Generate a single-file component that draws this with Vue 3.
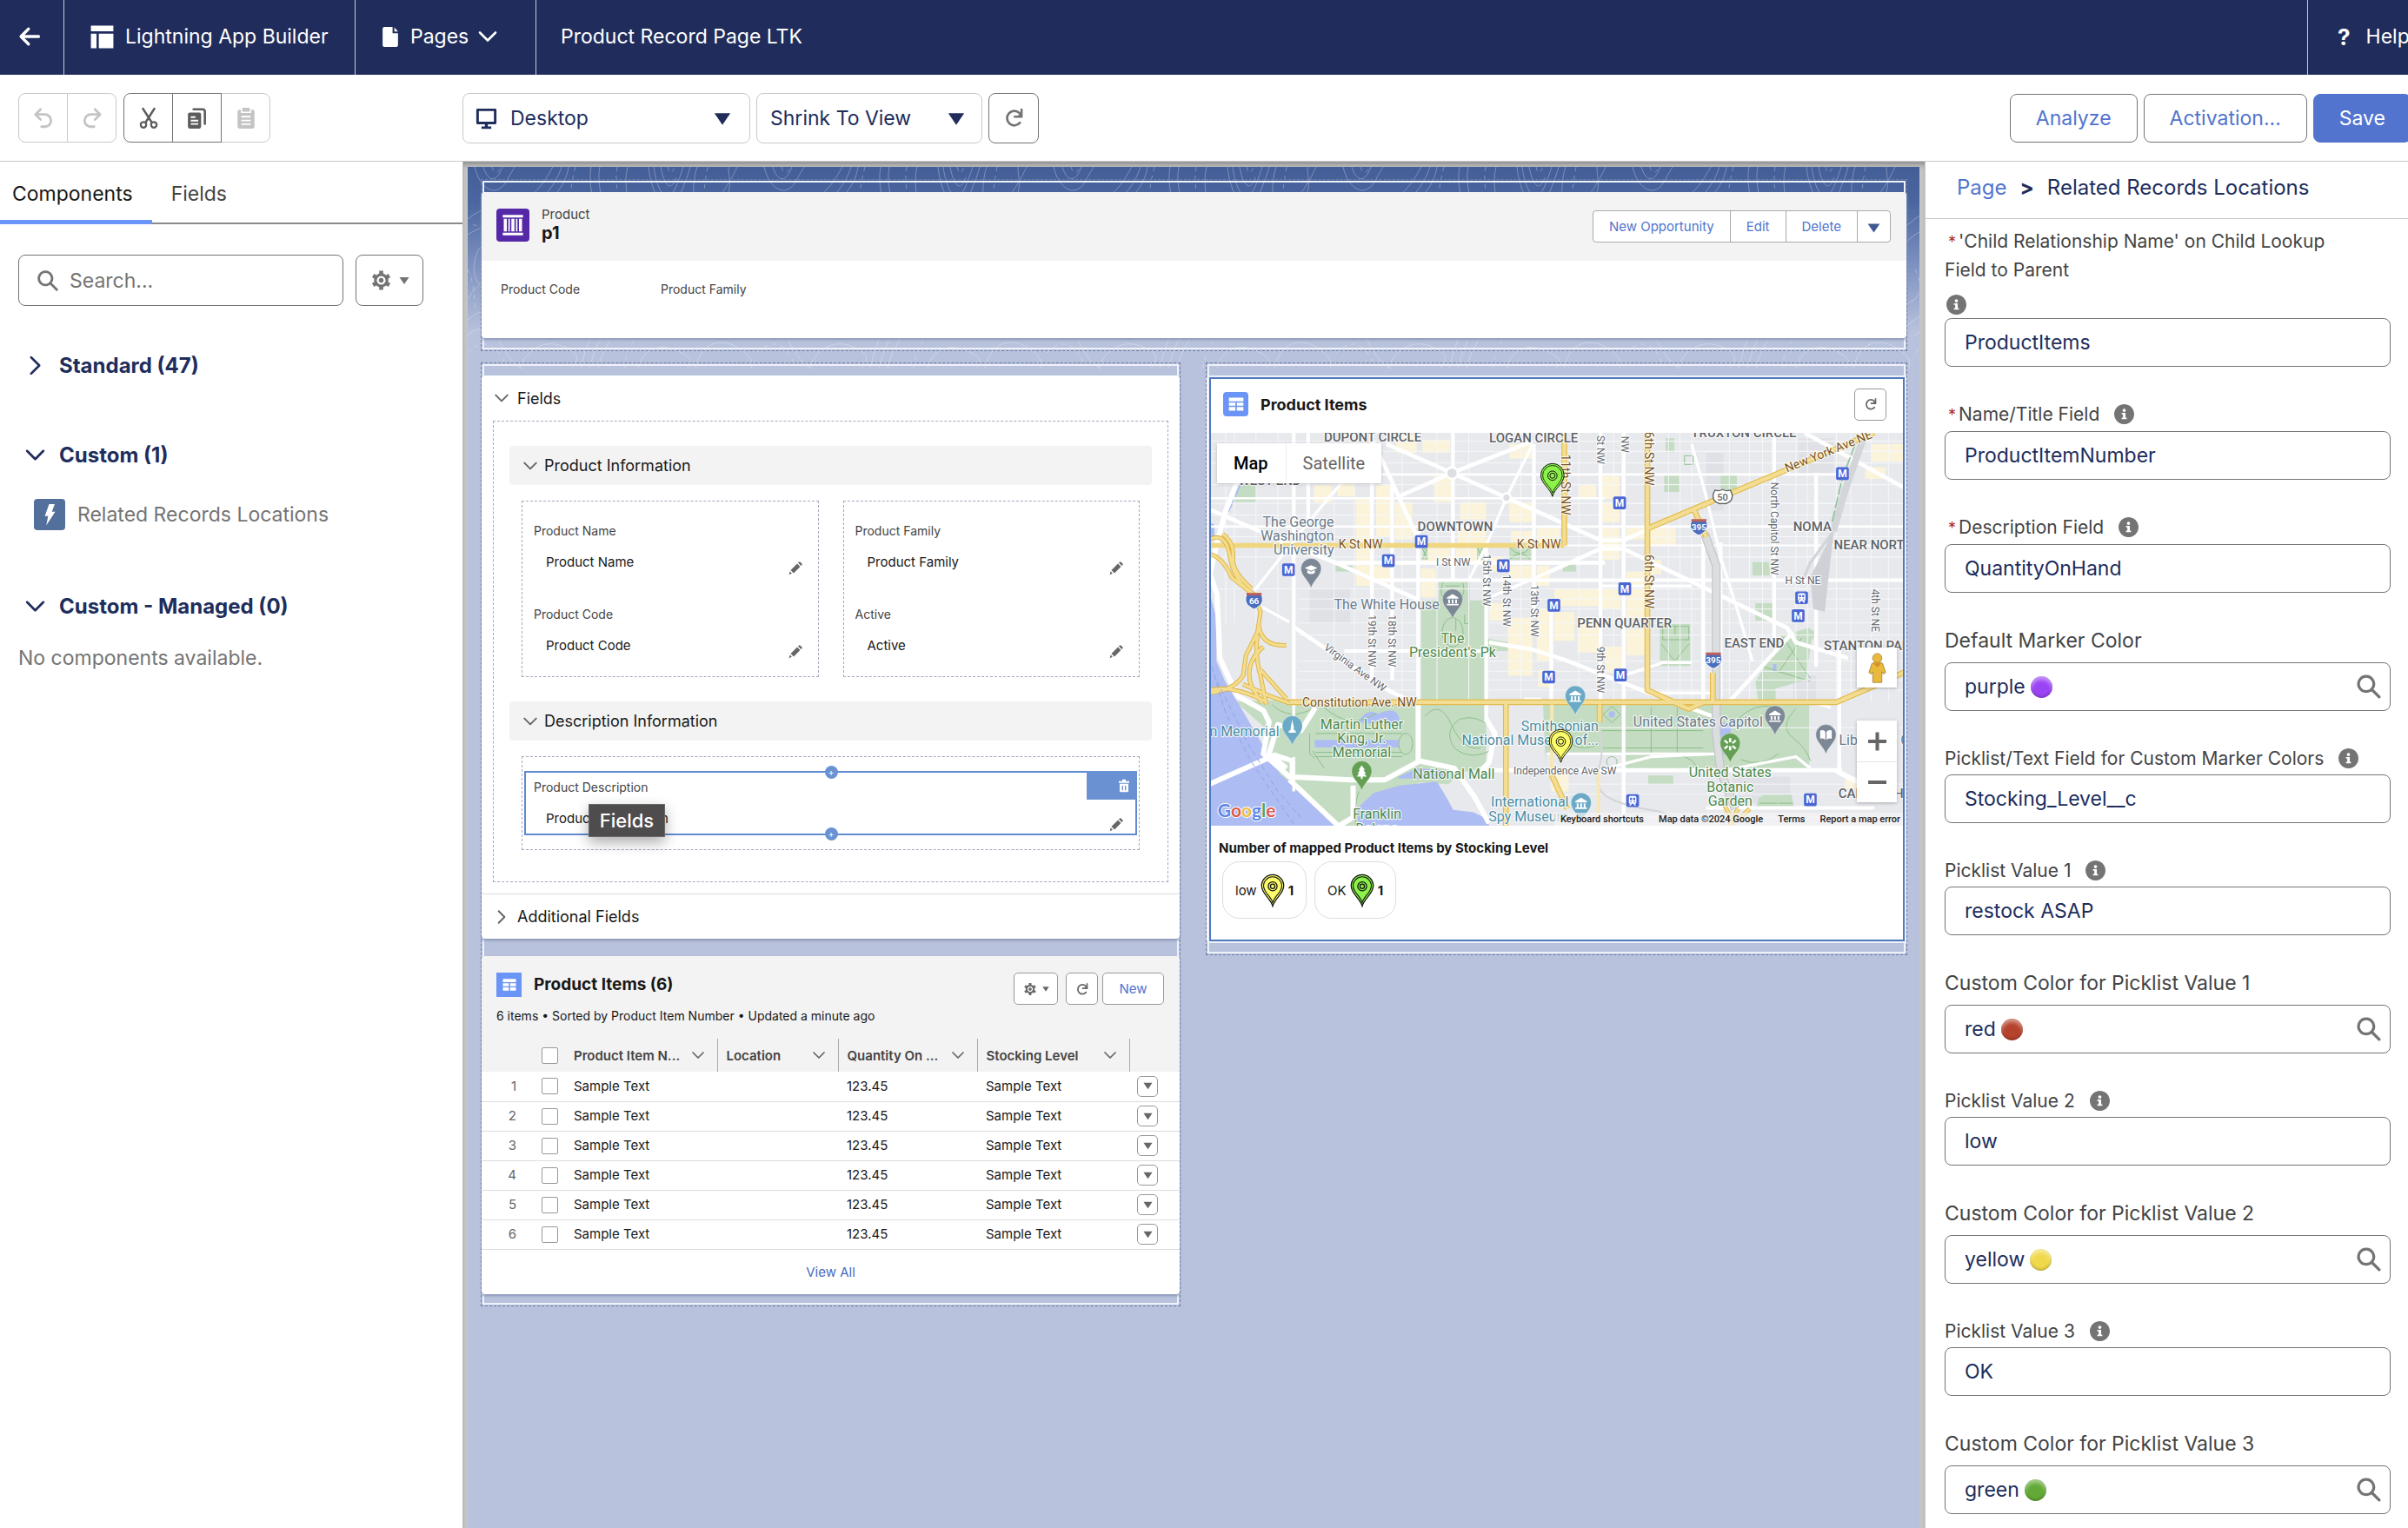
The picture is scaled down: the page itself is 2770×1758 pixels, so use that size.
<script setup>
import { h, ref } from 'vue'

const glyphs = {
  back: [{ s: 'M21 12H4M11 4.5L3.5 12l7.5 7.5', w: 2.8 }],
  builder: [{ f: 'M2 2h20v5H2zM2 9h5v13H2zM9 9h13v13H9z' }],
  page: [{ f: 'M5 1h9v7h6v13a2 2 0 0 1-2 2H5a2 2 0 0 1-2-2V3a2 2 0 0 1 2-2zM16 1.500l4 4.500h-4z' }],
  down: [{ s: 'M3 7.500l9 9 9-9', w: 2.6 }],
  right: [{ s: 'M7.500 3l9 9-9 9', w: 2.6 }],
  undo: [{ s: 'M9 2.500L3.500 8 9 13.500M4 8h9.500a6.500 6.500 0 0 1 0 13H10', w: 2.6 }],
  redo: [{ s: 'M15 2.500L20.500 8 15 13.500M20 8h-9.500a6.500 6.500 0 0 0 0 13H14', w: 2.6 }],
  cut: [
    { s: 'M6 2l9 14M18 2L9 16', w: 2.4 },
    { s: 'M6.500 16a3 3 0 1 0 .01 0zM17.500 16a3 3 0 1 0 .01 0z', w: 2.2 }
  ],
  copy: [
    { f: 'M4 6h10a2 2 0 0 1 2 2v13a2 2 0 0 1-2 2H4a2 2 0 0 1-2-2V8a2 2 0 0 1 2-2zM5 10v1.800h5V10zM5 13.600v1.800h8v-1.800zM5 17.200V19h8v-1.800z' },
    { s: 'M8 2.500h9.500a2.500 2.500 0 0 1 2.500 2.500v13', w: 2.4 }
  ],
  paste: [{ f: 'M8 1h8v4H8zM5 3h1.500v3.500h11V3H19a2 2 0 0 1 2 2v16a2 2 0 0 1-2 2H5a2 2 0 0 1-2-2V5a2 2 0 0 1 2-2zM7 9.500v1.700h10V9.500zM7 13.500v1.700h10v-1.700zM7 17.500v1.700h10v-1.700z' }],
  desktop: [
    { s: 'M3 3h18v13.500H3z', w: 2.6 },
    { f: 'M10.500 17h3v3h3.500v2.500H7V20h3.500z' }
  ],
  refresh: [
    { s: 'M18.500 17.500A8 8 0 1 1 18 6.800', w: 2.6 },
    { f: 'M21.500 2v10H11.700V9.500h4.600l2.700-3V2z' }
  ],
  gear: [
    { s: 'M12 5.700a6.300 6.300 0 1 0 .01 0z', w: 3 },
    { s: 'M12 1.500v4M12 18.500v4M21 6.800l-3.400 2M21 17.200l-3.400-2M3 6.800l3.400 2M3 17.200l3.400-2', w: 4.4, c: 'butt' },
    { f: 'M12 9.300a2.700 2.700 0 1 0 .01 0z' }
  ],
  search: [
    { s: 'M9.500 2.500a7 7 0 1 0 .01 0zM14.800 14.800L21.500 21.500', w: 2.6 }
  ],
  tri: [{ f: 'M1 4h22L12 20z' }],
  info: [{ f: 'M12 0a12 12 0 1 0 .01 0zM12 5.500a1.900 1.900 0 1 1-.01 0zM9 10.500h4.600v5.800H15v1.700H9v-1.700h1.600v-4.100H9z' }],
  pencil: [{ f: 'M1 23l1.500-6L5.800 20.500zM3.800 15L15 3.800l5.200 5.200L9 20.200zM16.500 2.400l1.200-1.200a2 2 0 0 1 2.800 0l2.300 2.300a2 2 0 0 1 0 2.800l-1.200 1.200z' }],
  trash: [{ f: 'M9 1h6v3h6v3H3V4h6zM4.500 8.500h15V21a2 2 0 0 1-2 2h-11a2 2 0 0 1-2-2zM8.500 12v8h2v-8zM13.500 12v8h2v-8z' }],
  table: [{ f: 'M2 3h20v5H2zM2 9.800h9v4.400H2zM13 9.800h9v4.400h-9zM2 16h9v5H2zM13 16h9v5h-9z' }],
  product: [{ f: 'M2 2h20v2.400H2zM2 19.600h20V22H2zM3 5.800h3v12.400H3zM7.500 5.800h1.500v12.400H7.500zM10.500 5.800h3v12.400h-3zM15 5.800h1.500v12.400H15zM18 5.800h3v12.400h-3z' }],
  bolt: [{ f: 'M11.500 1h6l-3 8H18L8.500 23.500l2-10H7z' }]
}

const Icon = (p) =>
  h(
    'svg',
    { viewBox: '0 0 24 24', width: p.size, height: p.size, 'aria-hidden': 'true', style: { display: 'block', flex: 'none' } },
    glyphs[p.name].map((g) =>
      g.f
        ? h('path', { d: g.f, fill: 'currentColor', 'fill-rule': 'evenodd' })
        : h('path', { d: g.s, fill: 'none', stroke: 'currentColor', 'stroke-width': g.w, 'stroke-linecap': g.c || 'round', 'stroke-linejoin': 'round' })
    )
  )
Icon.props = ['name', 'size']

const device = ref('Desktop')
const zoom = ref('Shrink To View')

const properties = [
  { id: 'child', label: "'Child Relationship Name' on Child Lookup Field to Parent", value: 'ProductItems', required: true, info: true },
  { id: 'title', label: 'Name/Title Field', value: 'ProductItemNumber', required: true, info: true },
  { id: 'desc', label: 'Description Field', value: 'QuantityOnHand', required: true, info: true },
  { id: 'default', label: 'Default Marker Color', value: 'purple', orb: 'purple' },
  { id: 'picklist', label: 'Picklist/Text Field for Custom Marker Colors', value: 'Stocking_Level__c', info: true },
  { id: 'v1', label: 'Picklist Value 1', value: 'restock ASAP', info: true },
  { id: 'c1', label: 'Custom Color for Picklist Value 1', value: 'red', orb: 'red' },
  { id: 'v2', label: 'Picklist Value 2', value: 'low', info: true },
  { id: 'c2', label: 'Custom Color for Picklist Value 2', value: 'yellow', orb: 'yellow' },
  { id: 'v3', label: 'Picklist Value 3', value: 'OK', info: true },
  { id: 'c3', label: 'Custom Color for Picklist Value 3', value: 'green', orb: 'green' }
]

const infoColumns = [['Product Name', 'Product Code'], ['Product Family', 'Active']]
const tableHeads = ['Product Item N...', 'Location', 'Quantity On ...', 'Stocking Level']
const legend = [
  { name: 'low', color: '#fdfd6b', count: 1 },
  { name: 'OK', color: '#8cf24a', count: 1 }
]

// Map geometry: three units per pixel.
const blocks = [
  [395, 440, 62, 62], [475, 330, 60, 150], [385, 370, 60, 40], [540, 490, 52, 150], [540, 660, 52, 130], [610, 440, 50, 180], [675, 500, 60, 130], [600, 720, 60, 60],
  [680, 270, 70, 60], [770, 285, 95, 45], [810, 410, 60, 90], [900, 500, 90, 60], [890, 590, 100, 55], [770, 660, 95, 45], [765, 730, 50, 100], [885, 660, 90, 45],
  [1070, 300, 80, 50], [1070, 500, 80, 70], [1165, 590, 80, 50], [1075, 600, 75, 40], [1070, 720, 80, 45], [1165, 720, 45, 70], [1000, 850, 55, 60], [1065, 900, 85, 200],
  [1165, 870, 45, 180], [1225, 800, 155, 60], [1225, 880, 70, 100], [1305, 900, 75, 120], [1390, 410, 60, 80], [1390, 500, 60, 70], [1390, 590, 60, 110], [1475, 590, 65, 40],
  [1555, 590, 90, 60], [1475, 740, 65, 50], [1475, 800, 65, 100], [1390, 800, 65, 70], [1475, 940, 65, 90], [1400, 1000, 60, 90], [1310, 440, 60, 50], [1555, 700, 40, 50],
  [1000, 690, 50, 50], [2320, 300, 110, 60], [2300, 380, 70, 40], [1170, 1080, 40, 60], [1215, 1440, 60, 60], [2230, 1450, 50, 40]
]
const minorV = [90, 120, 195, 270, 465, 535, 700, 820, 930, 1110, 1310, 1430, 1620, 1660, 1700, 1830, 1900, 1945, 2060, 2100, 2200, 2250, 2320, 2380]
const minorH = [290, 325, 365, 440, 505, 545, 620, 690, 800, 835, 870, 918, 960, 1050, 1085, 1115, 1150, 1280, 1475, 1510, 1590]
const streetsV = [[325, 261, 1190], [375, 261, 560], [595, 261, 1115], [665, 440, 1115], [755, 600, 1390], [875, 261, 770], [990, 640, 1260], [1155, 300, 900], [1215, 880, 1200], [1385, 261, 1190], [1465, 261, 1620], [1985, 261, 970], [2130, 400, 1070], [1800, 640, 1190], [1740, 600, 1190], [2210, 1000, 1430]]
const streetsH = [[405, 600, 2200, 8], [487, 33, 1400, 8], [585, 33, 2442, 8], [650, 1260, 2442, 6], [710, 480, 1400, 14], [770, 600, 2442, 12], [790, 1385, 1700, 10], [1015, 500, 1000, 12], [1370, 1200, 1760, 8], [1427, 960, 2220, 14], [1557, 1750, 2330, 12], [1180, 1120, 1180, 8]]
const metros = [[307, 734], [652, 703], [766, 637], [1049, 720], [1224, 857], [1451, 503], [1469, 800], [1206, 1105], [1454, 1098], [2221, 402], [2068, 893], [2110, 1529]]
const trains = [[2080, 831], [1496, 1532]]
const hoods = [['DUPONT CIRCLE', 598, 290], ['LOGAN CIRCLE', 1154, 293], ['TRUXTON CIRCLE', 1880, 275], ['WEST END', 242, 441], ['DOWNTOWN', 883, 600], ['PENN QUARTER', 1468, 934], ['EAST END', 1916, 1004], ['NOMA', 2117, 599], ['NEAR NORTHEAST', 2384, 663], ['STANTON PARK', 2320, 1012], ['CAPITOL HILL', 2350, 1524]]
const places = [
  { c: '#687a8c', a: 'end', x: 464, y: 585, t: ['The George', 'Washington', 'University'] },
  { c: '#687a8c', a: 'end', x: 828, y: 872, t: ['The White House'] },
  { c: '#4c8a4c', a: 'middle', x: 874, y: 988, t: ['The', "President's Pk"] },
  { c: '#4c8a4c', a: 'middle', x: 560, y: 1284, t: ['Martin Luther', 'King, Jr.', 'Memorial'] },
  { c: '#4c8a4c', a: 'middle', x: 878, y: 1456, t: ['National Mall'] },
  { c: '#4c8a4c', a: 'middle', x: 613, y: 1596, t: ['Franklin', 'Delano'] },
  { c: '#4b8fa6', a: 'end', x: 275, y: 1309, t: ['Lincoln Memorial'] },
  { c: '#4b8fa6', a: 'end', x: 1378, y: 1290, t: ['Smithsonian', 'National Museum of...'] },
  { c: '#4b8fa6', a: 'end', x: 1275, y: 1554, t: ['International', 'Spy Museum'] },
  { c: '#687a8c', a: 'end', x: 1946, y: 1277, t: ['United States Capitol'] },
  { c: '#687a8c', a: 'start', x: 2209, y: 1340, t: ['Library of Congress'] },
  { c: '#4c8a4c', a: 'middle', x: 1833, y: 1452, t: ['United States', 'Botanic', 'Garden'] }
]
const roadNames = [
  ['K St NW', 556, 662, 0, 'b'], ['K St NW', 1172, 662, 0, 'b'], ['I St NW', 876, 721, 0, 'g'], ['H St NE', 2084, 784, 0, 'g'],
  ['Constitution Ave. NW', 552, 1206, 0, 'b'], ['Independence Ave SW', 1262, 1440, 0, 'g'], ['Virginia Ave NW', 530, 1082, 36, 'g'],
  ['New York Ave NE', 2178, 338, -22, 'b'], ['11th St NW', 1250, 440, 90, 'b'], ['6th St NW', 1537, 350, 90, 'b'], ['6th St NW', 1537, 775, 90, 'b'],
  ['St NW', 1373, 320, 90, 'g'], ['St NW', 1456, 280, 90, 'g'], ['15th St NW', 980, 770, 90, 'g'], ['14th St NW', 1048, 840, 90, 'g'], ['13th St NW', 1143, 876, 90, 'g'],
  ['19th St NW', 582, 980, 90, 'g'], ['18th St NW', 652, 980, 90, 'g'], ['9th St NW', 1373, 1080, 90, 'g'], ['North Capitol St NW', 1974, 592, 90, 'g'], ['4th St NE', 2321, 875, 90, 'g']
]
const drop = 'M0 56C-6 30-35 14-35-12a35 35 0 0 1 70 0C35 14 6 30 0 56z'
const pois = [
  { x: 385, y: 742, c: '#7c8896', i: 'M-22-14L0-24 22-14 0-4zM-13-7v10q13 9 26 0V-7L0-1z' },
  { x: 874, y: 848, c: '#7c8896', i: 'M-20-18L0-30l20 12v4h-40zM-15-11h6V2h-6zM-3-11h6V2h-6zM9-11h6V2H9zM-20 4h40v5h-40z' },
  { x: 1988, y: 1251, c: '#7c8896', i: 'M-20-18L0-30l20 12v4h-40zM-15-11h6V2h-6zM-3-11h6V2h-6zM9-11h6V2H9zM-20 4h40v5h-40z' },
  { x: 2164, y: 1316, c: '#7c8896', i: 'M-20-26q12-4 18 4V6q-6-7-18-4zM20-26q-12-4-18 4V6q6-7 18-4z' },
  { x: 320, y: 1286, c: '#6aaac6', i: 'M0-34L5-10 6 4h6v7h-24V4h6l1-14z' },
  { x: 1298, y: 1182, c: '#6aaac6', i: 'M-20-18L0-30l20 12v4h-40zM-15-11h6V4h-6zM-3-11h6V4h-6zM9-11h6V4H9zM-20 4h40v5h-40z' },
  { x: 1318, y: 1552, c: '#6aaac6', i: 'M-20-18L0-30l20 12v4h-40zM-15-11h6V4h-6zM-3-11h6V4h-6zM9-11h6V4H9zM-20 4h40v5h-40z' },
  { x: 560, y: 1442, c: '#64a054', i: 'M0-32L11-16H6L14-4H9l8 11H3v8h-6V7h-14l8-11h-5l8-12h-5z' },
  { x: 1833, y: 1346, c: '#64a054', i: 'M-4-30h8v14h-8zM-22-20l5-5 11 10-4 5zM22-20l-5-5-11 10 4 5zM-22 4l5 5 11-10-4-5zM22 4l-5 5-11-10 4-5zM-4-2h8v14h-8z' }
]
const pin = 'M0 72C-8 42-40 28-40-2a40 40 0 0 1 80 0C40 28 8 42 0 72z'
</script>

<template>
  <div class="app">
    <header class="global">
      <button class="g-back" aria-label="Back"><Icon name="back" :size="28" /></button>
      <div class="g-app"><Icon name="builder" :size="31" /><span>Lightning App Builder</span></div>
      <button class="g-pages"><Icon name="page" :size="25" /><span>Pages</span><Icon name="down" :size="24" /></button>
      <h1 class="g-title">Product Record Page LTK</h1>
      <a class="g-help" href="#help"><b>?</b><span>Help</span></a>
    </header>

    <div class="toolbar">
      <div class="t-left">
        <div class="group">
          <button disabled aria-label="Undo"><Icon name="undo" :size="26" /></button>
          <button disabled aria-label="Redo"><Icon name="redo" :size="26" /></button>
        </div>
        <div class="group">
          <button class="on" aria-label="Cut"><Icon name="cut" :size="26" /></button>
          <button class="on" aria-label="Copy"><Icon name="copy" :size="26" /></button>
          <button disabled aria-label="Paste"><Icon name="paste" :size="26" /></button>
        </div>
      </div>
      <div class="t-mid">
        <div class="pick device">
          <Icon name="desktop" :size="27" class="lead" />
          <select v-model="device" aria-label="Form factor"><option>Desktop</option></select>
          <Icon name="tri" :size="20" class="caret" />
        </div>
        <div class="pick">
          <select v-model="zoom" aria-label="Zoom"><option>Shrink To View</option></select>
          <Icon name="tri" :size="20" class="caret" />
        </div>
        <button class="box-btn" aria-label="Refresh"><Icon name="refresh" :size="25" /></button>
      </div>
      <div class="t-right">
        <button class="btn">Analyze</button>
        <button class="btn">Activation...</button>
        <button class="btn brand">Save</button>
      </div>
    </div>

    <div class="body">
      <aside class="left">
        <nav class="tabs">
          <a href="#components" class="active">Components</a>
          <a href="#fields">Fields</a>
        </nav>
        <div class="search-row">
          <label class="search"><Icon name="search" :size="26" /><input type="text" placeholder="Search..." aria-label="Search components" /></label>
          <button class="cog" aria-label="Settings"><Icon name="gear" :size="25" /><Icon name="tri" :size="12" /></button>
        </div>
        <section class="tree">
          <h2><Icon name="right" :size="25" />Standard (47)</h2>
          <h2><Icon name="down" :size="25" />Custom (1)</h2>
          <a href="#component" class="leaf"><i><Icon name="bolt" :size="26" /></i>Related Records Locations</a>
          <h2 class="managed"><Icon name="down" :size="25" />Custom - Managed (0)</h2>
          <p>No components available.</p>
        </section>
      </aside>

      <main class="stage">
        <div class="canvas">
          <svg class="topo" aria-hidden="true">
            <defs>
              <pattern id="topo" width="333" height="232" patternUnits="userSpaceOnUse">
                <g fill="none" stroke="#fff" stroke-width="1">
                  <path d="M8 0c6 26 26 38 38 14 4-8 6-10 8-14M18 0c4 14 14 22 22 0M62 40c20-10 30-30 36-40M70 46c24-12 34-34 38-46M80 50c26-18 34-36 36-50M142 0c-4 20 4 36 2 56M152 0c-4 20 4 36 4 56M184 0c-6 20 4 42-2 60M214 0c4 30 16 46 26 22 4-10 6-16 8-22M222 0c4 22 12 30 18 12M208 0c4 36 22 62 38 28 4-10 8-20 10-28M264 0c-6 16-4 40-4 60M286 46c22-16 14-30 14-46M310 0c-14 30-24 36-34 56" />
                  <path d="M0 60c20-16 32-14 44 2s34 10 50 2 40-14 54 6 36 18 54 2 36-18 54 0 50 10 77-12M0 78c22-14 30-10 44 4s30 22 52 10 36-10 52 4 38 14 58-2 32-12 50 4 46 6 77-20M12 96c10-16 30-4 24 16s-22 36-28 12c-2-10 0-18 4-28zM0 152c14-22 30-30 40-14s22 36 42 18 40-24 58-4 42 26 60 2 42-20 60 4 40 14 73-6" />
                  <path d="M0 176c18-14 32-18 46 0s34 20 54 2 42-18 60 4 38 16 56-4 36-16 54 2 38 12 63-4M0 194c10-10 26-12 36 6s18 30 28 32M60 232c6-20 26-34 48-26s20 16 12 26M130 232c4-16 8-34 22-54M140 232c4-16 10-34 24-52M150 232c4-18 12-32 26-50M196 232c6-26 30-30 50-18 16 8 10 14 6 18M262 232c6-30 30-38 52-22 12 8 14 14 12 22" />
                  <path stroke-dasharray="5 5" d="M28 0c2 8 6 10 10 0M124 0c-6 20-4 36-16 54M172 0c-4 20 4 40 2 58M230 0c2 8 4 10 8 0M276 0c-4 20-4 34-8 54M6 66c20 10 30 4 50 14M0 214c20-20 36-8 44 16M180 232c2-20 10-34 22-46M0 118c10 20 6 36 10 48M320 90c-8 20-10 40 4 56" />
                </g>
              </pattern>
            </defs>
            <rect width="100%" height="100%" fill="url(#topo)" />
          </svg>

          <section class="region top">
            <article class="card highlights">
              <div class="hl-head">
                <span class="obj"><Icon name="product" :size="28" /></span>
                <div><p>Product</p><h2>p1</h2></div>
                <div class="actions">
                  <button>New Opportunity</button><button>Edit</button><button>Delete</button><button aria-label="More actions"><Icon name="tri" :size="15" /></button>
                </div>
              </div>
              <div class="hl-body"><span>Product Code</span><span>Product Family</span></div>
            </article>
          </section>

          <div class="cols">
            <section class="region col-a">
              <article class="card">
                <h3 class="acc"><Icon name="down" :size="18" />Fields</h3>
                <div class="drop">
                  <h4><Icon name="down" :size="18" />Product Information</h4>
                  <div class="pair">
                    <dl v-for="(col, c) in infoColumns" :key="c" class="slot">
                      <div v-for="f in col" :key="f" class="fld">
                        <dt>{{ f }}</dt>
                        <dd>{{ f }}<Icon name="pencil" :size="16" /></dd>
                      </div>
                    </dl>
                  </div>
                  <h4 class="second"><Icon name="down" :size="18" />Description Information</h4>
                  <div class="slot single">
                    <dl class="chosen">
                      <dt>Product Description</dt>
                      <dd>Product Description<Icon name="pencil" :size="16" /></dd>
                      <button class="del" aria-label="Delete"><Icon name="trash" :size="16" /></button>
                      <span class="plus up">+</span><span class="plus low">+</span>
                      <span class="tip">Fields</span>
                    </dl>
                  </div>
                </div>
                <h3 class="acc more"><Icon name="right" :size="18" />Additional Fields</h3>
              </article>

              <article class="card list">
                <div class="l-head">
                  <div class="l-title">
                    <h3><i><Icon name="table" :size="18" /></i>Product Items (6)</h3>
                    <p>6 items • Sorted by Product Item Number • Updated a minute ago</p>
                  </div>
                  <button class="sm cogs" aria-label="List settings"><Icon name="gear" :size="16" /><Icon name="tri" :size="8" /></button>
                  <button class="sm" aria-label="Refresh list"><Icon name="refresh" :size="16" /></button>
                  <button class="sm new">New</button>
                </div>
                <table>
                  <colgroup><col class="w-num" /><col class="w-chk" /><col class="w-a" /><col class="w-b" /><col class="w-c" /><col class="w-d" /><col /></colgroup>
                  <thead>
                    <tr>
                      <th></th>
                      <th><input type="checkbox" aria-label="Select all" /></th>
                      <th v-for="t in tableHeads" :key="t" class="named"><span>{{ t }}<Icon name="down" :size="16" /></span></th>
                      <th></th>
                    </tr>
                  </thead>
                  <tbody>
                    <tr v-for="n in 6" :key="n">
                      <td class="num">{{ n }}</td>
                      <td><input type="checkbox" :aria-label="'Select row ' + n" /></td>
                      <td class="t">Sample Text</td>
                      <td></td>
                      <td class="t">123.45</td>
                      <td class="t">Sample Text</td>
                      <td class="act"><button :aria-label="'Row ' + n + ' actions'"><Icon name="tri" :size="11" /></button></td>
                    </tr>
                  </tbody>
                </table>
                <a class="all" href="#all">View All</a>
              </article>
            </section>

            <section class="region col-b">
              <article class="card mapcard">
                <div class="m-head">
                  <i><Icon name="table" :size="20" /></i>
                  <h3>Product Items</h3>
                  <button class="sm" aria-label="Refresh map"><Icon name="refresh" :size="16" /></button>
                </div>
                <div class="map">
                  <svg viewBox="33 261 2409 1359" preserveAspectRatio="xMidYMid slice" role="img" aria-label="Map of Washington DC">
                    <rect x="33" y="261" width="2409" height="1359" fill="#e7e9ed" />
                    <g fill="#dfe1e6"><rect x="1750" y="330" width="60" height="200" /><rect x="2070" y="280" width="120" height="120" /><rect x="380" y="800" width="140" height="120" /><rect x="2050" y="1100" width="80" height="90" /><rect x="1840" y="1450" width="200" height="90" /></g>
                    <g fill="#fbf4da"><rect v-for="(b, i) in blocks" :key="i" :x="b[0]" :y="b[1]" :width="b[2]" :height="b[3]" /></g>
                    <g fill="#c4dcc2">
                      <path d="M765 840h60v-65h108v65h55v350H765zM110 1190l130-5h1750l116 5v237h-640v-60h-270v60l-10-237H990v230l-90 15-40 40-100-6-100 40-110 60v78h-90L330 1490 215 1380l10-100-90-80z" />
                      <path d="M1210 1200h600v170h-600zM1590 922h105v145h-105zM1920 850h60v60h-60zM1910 728h60v26h-60zM1605 405h52v60h-52zM1610 280h30v48h-30zM120 440h75v60h-75zM1920 1120l100-160 95 10-20 145-105 30v45h-60zM1910 708h58v34h-58zM2055 950l50-15 30 20-20 22-50-5z" />
                      <path d="M1070 655h75v45h-75zM770 655h18v45h-18zM958 655h22v45h-22zM1550 1445h86v30h-86zM985 970l80 15v30h-70zM1800 405h56v60h-56zM1255 705h45v35h-45zM470 720h58v20h-58zM1930 1525l20-14h55l8 48h-90zM1996 1511h50l6 48h-56z" />
                    </g>
                    <g fill="#adbdf3">
                      <path d="M33 810l25 90v150l30 70 60 100 70 120 60 100 70 60 120 120H33z" />
                      <path d="M548 1620l-4-60 56-54 90-26 130-14 36 60 20 38 70 8 40 20 16 28z" />
                      <path d="M550 1260q20-40 50-34 20 10 30 0 30-10 44-2 20 14 16 40-30 18-60-6-40 14-80 2zM398 1322h290v26H398zM685 1450l70-30 90 8 10 28H690zM1794 1262h46l-20 110h-26z" />
                      <circle cx="1424" cy="1234" r="11" />
                      <path d="M130 440l12 4-40 90-10-4zM33 570l18 8v40l-18 10zM1981 1060h12v28h-12z" />
                    </g>
                    <g fill="none" stroke="#8ebf8c" stroke-width="3">
                      <path d="M840 780q-20 60 34 64 50-6 36-64M850 790h50M874 900a36 50 0 1 0 .1 0M885 905v40M915 890v30h16M1020 1290q-60-60-120-40-60 40-20 100 60 50 140 0M780 1240q50-60 90 30t100 80M400 1300h300M400 1365h300M400 1380h300M380 1300v70l18 16M712 1300a24 36 0 1 0 .1 0M250 1200q60 60 150 10M430 1210q90 80 180 20M1390 1290h350M1390 1350h350M1470 1210v160M1560 1210v160M1650 1210v160M1424 1206l-30 28 30 28 30-28zM1600 930h90v46h-90zM1595 990l46 60 50-60M1595 1050h95M1643 930v30M2060 1215q-60 60-10 100t60 80M1860 1250q60-60 130-40M1870 1390q70 30 130-20M1424 1380a18 18 0 1 0 .1 0M1290 1340q40 20 80 0M1655 1375q60 10 70 60" />
                      <path d="M1950 1070l160 50M2080 970l-80 120M2010 960l100 150M550 1500q-20 60-10 120M430 1420l-40-60M1935 1541h60M2000 1541h50" />
                      <path d="M770 660l16 38M786 660l-16 38M960 660l18 38M978 660l-18 38M1072 658q36 40 70 0M1072 698q36-40 70 0M1675 340h30v30h-30z" />
                    </g>
                    <g stroke="#f6f7f9" stroke-width="3">
                      <path v-for="x in minorV" :key="'v' + x" :d="`M${x} 261V${x < 300 ? 920 : 1190}`" />
                      <path v-for="y in minorH" :key="'h' + y" :d="y > 1200 ? `M1210 ${y}H2442` : `M${y > 830 ? 340 : 33} ${y}H${y > 830 ? 750 : 2442}M${y > 830 ? 1000 : 1200} ${y}H2442`" />
                    </g>
                    <g fill="none" stroke="#fff" stroke-linejoin="round">
                      <path v-for="s in streetsV" :key="'sv' + s[0]" :d="`M${s[0]} ${s[1]}V${s[2]}`" stroke-width="13" />
                      <path v-for="s in streetsH" :key="'sh' + s[0]" :d="`M${s[1]} ${s[0]}H${s[2]}`" :stroke-width="s[3]" />
                      <path stroke-width="14" d="M645 300L850 390 1060 485 1260 575 1385 632H1465L1560 590M1200 745L1385 662H1465L1700 775 2030 935 2060 985 2240 1040M690 480L870 400 1150 290M600 290L660 420 760 640M33 525L330 655 470 710 750 835M330 935L440 1010 650 1150 740 1195M1000 985L1150 1010 1260 1045 1540 1155 1770 1240M2090 261L2442 455M1830 1190L2050 950" />
                      <path stroke-width="10" d="M1150 300L1060 485 990 650 930 770M190 805L360 590 450 480 540 380M210 860L310 915M1700 300L1750 480 1800 690 1860 880 1910 1050M1000 830L1200 745M1465 1100L1600 1055 1700 1055M1370 1430L1560 1380 1790 1370M1800 1430L2060 1380 2110 1420M325 1190V1500M1540 1160L1770 1160M2110 1190L2180 1210" />
                      <path stroke-width="18" d="M130 430L90 530 60 640 33 760M33 740L60 820 70 1040 130 1170 220 1220 240 1260 220 1370 310 1450 520 1460 640 1460 760 1395 880 1420 950 1520 1000 1610M33 1475L260 1375 320 1395V1470M310 1460L480 1620M400 1210L350 1290 270 1270 240 1370 300 1420M755 1190V1400M530 1480V1590L480 1620M990 1250L1020 1300 1000 1400 960 1440M2200 1430L2300 1480" />
                    </g>
                    <circle cx="872" cy="400" r="20" fill="#dcdee2" stroke="#fff" stroke-width="8" />
                    <circle cx="1060" cy="485" r="15" fill="#dcdee2" stroke="#fff" stroke-width="8" />
                    <circle cx="323" cy="1340" r="42" fill="#c4dcc2" />
                    <g fill="none" stroke="#d3d5d9">
                      <path stroke-width="24" d="M2300 261L2230 460 2190 600" />
                      <path stroke-width="10" d="M2190 600L2110 710 2080 780" />
                      <path stroke-width="6" d="M1380 1290q20 60 0 130t30 100 180 50l100 40" />
                    </g>
                    <path d="M2192 590L2160 880 2120 870 2110 760 2150 680z" fill="#cfd1d6" />
                    <path d="M1745 610L1785 720V1300L1800 1430 1850 1560" fill="none" stroke="#c2c4c8" stroke-width="30" />
                    <path d="M1745 610L1785 720V1300L1800 1430 1850 1560" fill="none" stroke="#dcdddf" stroke-width="23" />
                    <g fill="none" stroke-linejoin="round">
                      <path v-for="l in [{ c: '#e3bb4d', w: 0 }, { c: '#f3dd92', w: 7 }]" :key="l.c" :stroke="l.c" :stroke-width="20 - l.w" d="M300 1192H2200L2320 1140 2442 1085M1547 261V1150L1690 1215 1740 1192M1547 592L2330 261M1260 261V650M1058 1195V1620M1382 1200V1260M1773 1090V1190M1705 520L1750 620M1215 1440L1270 1560" />
                      <path d="M33 650H1260" stroke="#f0d67e" stroke-width="16" />
                      <path d="M1217 1200V1430M1378 1430V1620" stroke="#f7e7b0" stroke-width="12" />
                      <path v-for="l in [{ c: '#dcae3a', w: 0 }, { c: '#f3dc8c', w: 5 }]" :key="l.w" :stroke="l.c" :stroke-width="15 - l.w" d="M33 630Q90 600 105 690T190 820L210 880 200 950 160 1030 150 1100Q120 1150 33 1160M80 610Q120 640 115 690T180 800M33 680Q80 690 110 760L185 820M205 930Q215 1000 300 995M200 960Q190 1030 210 1100L230 1200M220 1000Q150 1060 180 1140L215 1195M150 1130L240 1170 310 1195M210 1080L300 1180M33 1150Q110 1130 230 1190M1810 1540L1840 1600V1620M1860 1560L1830 1620M1900 1560L1860 1600" />
                    </g>
                    <path d="M33 1040L90 1230 180 1400 330 1620M60 1120L170 1340 270 1500 350 1590" fill="none" stroke="#8ea3e6" stroke-width="3" stroke-dasharray="18 12" />
                    <path d="M2265 300L2220 420 2185 570" fill="none" stroke="#8cc39a" stroke-width="5" stroke-dasharray="40 8" />

                    <g class="road">
                      <text v-for="(r, i) in roadNames" :key="i" :class="r[4]" :transform="`translate(${r[1]} ${r[2]}) rotate(${r[3]})`" text-anchor="middle">{{ r[0] }}</text>
                    </g>
                    <g class="hood"><text v-for="d in hoods" :key="d[0]" :x="d[1]" :y="d[2]" text-anchor="middle">{{ d[0] }}</text></g>
                    <g class="place">
                      <text v-for="p in places" :key="p.t[0]" :fill="p.c" :text-anchor="p.a"><tspan v-for="(t, i) in p.t" :key="t" :x="p.x" :y="p.y + i * 49">{{ t }}</tspan></text>
                    </g>
                    <g v-for="m in metros" :key="m[0] + '-' + m[1]" class="metro" :transform="`translate(${m[0]} ${m[1]})`">
                      <rect x="-22" y="-22" width="44" height="44" rx="6" fill="#4a67d6" /><text y="13" text-anchor="middle">M</text>
                    </g>
                    <g v-for="m in trains" :key="m[0]" :transform="`translate(${m[0]} ${m[1]})`">
                      <rect x="-22" y="-22" width="44" height="44" rx="6" fill="#4a67d6" />
                      <path fill="#fff" fill-rule="evenodd" d="M-13-11q0-5 5-5H8q5 0 5 5V6q0 5-5 5l4 6H6l-3-6h-6l-3 6h-6l4-6q-5 0-5-5zM-9-10v8h7v-8zM2-10v8h7v-8zM-8 2v4h4V2zM4 2v4h4V2z" />
                    </g>
                    <g v-for="s in [[188, 838, '66'], [1725, 583, '395'], [1775, 1044, '395']]" :key="s[1]" class="shield" :transform="`translate(${s[0]} ${s[1]})`">
                      <path d="M-25-22h50q12 32-8 44Q8 30 0 32q-8-2-17-10-20-12-8-44z" fill="#4b6ec0" stroke="#fff" stroke-width="3" />
                      <path d="M-26-24h52v9h-52z" fill="#bf5f5a" /><text y="14" text-anchor="middle">{{ s[2] }}</text>
                    </g>
                    <g transform="translate(1807 481)"><path d="M-26-22q13 5 26-2 13 7 26 2 12 18 4 34-14 16-30 12-16 4-30-12-8-16 4-34z" fill="#fff" stroke="#5f6368" stroke-width="4" /><text class="us" y="13" text-anchor="middle">50</text></g>
                    <g v-for="p in pois" :key="p.x" :transform="`translate(${p.x} ${p.y})`">
                      <path :d="drop" :fill="p.c" stroke="#ffffff88" stroke-width="2" /><path :d="p.i" fill="#fff" />
                    </g>
                    <g v-for="p in [[1219, 409, '#8cf24a'], [1248, 1328, '#fdfd6b']]" :key="p[0]" :transform="`translate(${p[0]} ${p[1]})`">
                      <path :d="pin" :fill="p[2]" stroke="#111" stroke-width="3" />
                      <path :d="pin" fill="none" stroke="#111" stroke-width="3" transform="scale(.84)" />
                      <circle r="16" fill="none" stroke="#111" stroke-width="3" /><circle r="9" fill="none" stroke="#111" stroke-width="3" />
                    </g>
                    <text class="logo" x="62" y="1588"><tspan fill="#5b86e8">G</tspan><tspan fill="#dc5a4c">o</tspan><tspan fill="#ecbd3e">o</tspan><tspan fill="#5b86e8">g</tspan><tspan fill="#55a566">l</tspan><tspan fill="#dc5a4c">e</tspan></text>
                  </svg>
                  <div class="kinds"><button class="cur">Map</button><button>Satellite</button></div>
                  <div class="ctl">
                    <button class="peg" aria-label="Street View">
                      <svg viewBox="0 0 24 40" width="21" height="35"><path d="M5 14q7-4 14 0l4 12-3 2-2-3v14H6V25l-2 3-3-2z" fill="#e8b93a" stroke="#a98538" /><circle cx="12" cy="7" r="6" fill="#e8b93a" stroke="#a98538" /><path d="M7 14h10l-5 5z" fill="#d98a2b" /></svg>
                    </button>
                    <div class="zoomer"><button aria-label="Zoom in"><i></i><i class="v"></i></button><button aria-label="Zoom out"><i></i></button></div>
                  </div>
                  <div class="credit"><a href="#keys">Keyboard shortcuts</a><span>Map data ©2024 Google</span><a href="#terms">Terms</a><a href="#report">Report a map error</a></div>
                </div>
                <h4>Number of mapped Product Items by Stocking Level</h4>
                <div class="pills">
                  <span v-for="l in legend" :key="l.name">{{ l.name }}
                    <svg viewBox="-44 -46 88 122" width="28" height="39" aria-hidden="true">
                      <path :d="pin" :fill="l.color" stroke="#111" stroke-width="4" /><path :d="pin" fill="none" stroke="#111" stroke-width="4" transform="scale(.82)" />
                      <circle r="16" fill="none" stroke="#111" stroke-width="4" /><circle r="8" fill="none" stroke="#111" stroke-width="4" />
                    </svg><b>{{ l.count }}</b></span>
                </div>
              </article>
            </section>
          </div>
        </div>
      </main>

      <aside class="right">
        <nav class="crumbs"><a href="#page">Page</a><b>&gt;</b><span>Related Records Locations</span></nav>
        <form class="props">
          <div v-for="p in properties" :key="p.id" class="prop" :class="{ lookup: p.orb, first: p.id === 'child' }">
            <div class="lab">
              <label :for="p.id"><abbr v-if="p.required">*</abbr>{{ p.label }}</label>
              <span v-if="p.info" class="info"><Icon name="info" :size="23" /></span>
            </div>
            <div class="inp">
              <input :id="p.id" type="text" :value="p.value" :class="{ fit: p.orb }" />
              <span v-if="p.orb" class="orb" :class="p.orb"></span>
              <Icon v-if="p.orb" name="search" :size="30" class="mag" />
            </div>
          </div>
        </form>
      </aside>
    </div>
  </div>
</template>

<style>
body { background: #fff; }
#app { overflow: hidden; }
</style>

<style scoped>
.app { min-height: 100vh; display: flex; flex-direction: column; font-family: Inter, "Liberation Sans", sans-serif; font-size: 23px; color: #181818; background: #fff; }
.app *, .app *::before, .app *::after { box-sizing: border-box; }
button, input, select { font: inherit; color: inherit; margin: 0; }
button { background: #fff; border: 0; padding: 0; display: flex; align-items: center; justify-content: center; }
a { color: inherit; text-decoration: none; }
h1, h2, h3, h4, p, dl, dd { margin: 0; font-size: inherit; font-weight: 400; }
i { font-style: normal; }

.global { display: flex; height: 86px; width: calc(100% + 24px); background: #202d5c; color: #fff; }
.global > * { display: flex; align-items: center; padding-bottom: 2px; background: none; }
.g-back { width: 74px; border-right: 1px solid #c9c9c9; padding-right: 6px; }
.g-app { width: 335px; padding-left: 28px; gap: 11px; border-right: 1px solid #c9c9c9; }
.g-pages { width: 208px; padding-left: 28px; gap: 10px; justify-content: flex-start; border-right: 1px solid #c9c9c9; }
.g-title { padding-left: 28px; flex: 1; }
.g-help { width: 140px; border-left: 1px solid #c9c9c9; padding-left: 34px; gap: 18px; }
.g-help b { font-size: 26px; }

.toolbar { display: flex; height: 100px; width: calc(100% + 24px); align-items: center; border-bottom: 1px solid #c9c9c9; }
.t-left { width: 532px; padding-left: 21px; display: flex; gap: 8px; }
.group { display: flex; }
.group button { width: 57px; height: 57px; margin-right: -1px; border: 1px solid #c9c9c9; color: #c4c4c4; }
.group button.on { border-color: #747474; color: #5c5c5c; position: relative; }
.group button:first-child { border-radius: 8px 0 0 8px; }
.group button:last-child { border-radius: 0 8px 8px 0; margin-right: 0; }
.t-mid { display: flex; gap: 7px; flex: 1; }
.pick { position: relative; width: 260px; height: 58px; color: #202d5c; }
.pick.device { width: 331px; }
.pick select { width: 100%; height: 100%; border: 1px solid #c9c9c9; border-radius: 8px; background: #fff; appearance: none; padding: 0 40px 0 15px; color: #202d5c; }
.pick.device select { padding-left: 54px; }
.lead { position: absolute; left: 14px; top: 16px; }
.caret { position: absolute; right: 20px; top: 20px; pointer-events: none; }
.pick.device .caret { right: 22px; }
.box-btn { width: 58px; height: 58px; border: 1px solid #747474; border-radius: 8px; color: #747474; }
.t-right { display: flex; gap: 7px; padding-right: 20px; }
.btn { height: 56px; border: 1px solid #747474; border-radius: 8px; padding: 0 29px; color: #5274ce; }
.btn.brand { background: #5274ce; border-color: #5274ce; color: #fff; }

.body { display: flex; flex: 1; align-items: stretch; }
.left { width: 533px; flex: none; border-right: 1px solid #bbb; }
.tabs { display: flex; height: 72px; border-bottom: 2px solid #8a8a8a; }
.tabs a { padding: 23px 22px 0 22px; color: #444; }
.tabs a.active { padding-left: 14px; color: #181818; border-bottom: 5px solid #6a94f8; margin-bottom: -2px; }
.search-row { display: flex; gap: 14px; padding: 35px 0 0 21px; }
.search { width: 374px; height: 59px; border: 1px solid #747474; border-radius: 8px; display: flex; align-items: center; padding-left: 20px; gap: 12px; color: #747474; }
.search input { flex: 1; min-width: 0; border: 0; outline: 0; padding: 0; background: none; }
.search input::placeholder { color: #747474; opacity: 1; }
.cog { width: 78px; height: 59px; border: 1px solid #747474; border-radius: 8px; color: #747474; gap: 8px; }
.tree h2 { display: flex; align-items: center; gap: 15px; height: 30px; margin: 53px 0 0 28px; font-size: 24px; font-weight: 700; color: #202d5c; }
.tree h2 + h2 { margin-top: 73px; }
.tree .leaf { display: flex; align-items: center; gap: 14px; height: 36px; margin: 36px 0 0 39px; color: #747474; }
.leaf i { width: 36px; height: 36px; border-radius: 4px; background: #53709c; color: #fff; display: flex; align-items: center; justify-content: center; }
.tree h2.managed { margin-top: 72px; }
.tree p { margin: 30px 0 0 21px; line-height: 30px; color: #747474; }

.stage { flex: 1; min-width: 0; padding: 6px 6px 0 5px; background: #c6c6c6; box-shadow: inset 0 6px 6px -3px #888; display: flex; }
.canvas { position: relative; flex: 1; min-width: 0; padding: 14px 14px 30px 15px; background: #b8c2dc linear-gradient(#445e98 0, #4a659f 40px, #7b90bf 110px, #b8c2dc 190px) no-repeat; background-size: 100% 232px; background-color: #b8c2dc; }
.topo { position: absolute; left: 0; top: 0; width: 100%; height: 232px; opacity: .3; }
.region { position: relative; border: 1px dashed #6d7ca5; }
.region::before { content: ""; position: absolute; inset: 1px; border: 2px solid #eef1f8; pointer-events: none; }
.card { position: relative; background: #fff; border-radius: 4px; box-shadow: 0 2px 3px #8b97b6; overflow: hidden; }
.top { padding: 14px 0; }
.hl-head { display: flex; align-items: center; height: 79px; background: #f3f3f3; padding: 0 18px 0 17px; font-size: 15px; color: #444; }
.obj { width: 38px; height: 38px; border-radius: 4px; background: #5428a6; color: #fff; display: flex; align-items: center; justify-content: center; margin: 0 14px 4px 0; }
.hl-head p { line-height: 18px; }
.hl-head h2 { font-size: 20px; line-height: 24px; font-weight: 700; color: #181818; margin-bottom: 4px; }
.actions { display: flex; margin-left: auto; }
.actions button { height: 37px; padding: 0 18px; border: 1px solid #aaa; margin-left: -1px; color: #5274ce; }
.actions button:first-child { border-radius: 4px 0 0 4px; }
.actions button:last-child { border-radius: 0 4px 4px 0; padding: 3px 11px 0; color: #40588f; }
.hl-body { height: 89px; padding: 23px 22px; display: flex; font-size: 14px; line-height: 20px; color: #444; }
.hl-body span { width: 184px; }

.cols { display: grid; grid-template-columns: 805fr 807fr; gap: 29px; align-items: start; margin-top: 13px; }
.col-a { padding: 14px 0 13px; display: flex; flex-direction: column; gap: 20px; }
.acc { display: flex; align-items: center; gap: 9px; height: 52px; padding: 0 14px; font-size: 18px; }
.acc svg, .drop h4 svg { color: #666; }
.acc.more { margin-top: 13px; border-top: 1px solid #ddd; }
.drop { margin: 0 13px; border: 1px dashed #a3aac0; padding: 28px 18px 36px; }
.drop h4 { display: flex; align-items: center; gap: 7px; height: 45px; padding: 0 15px; background: #f3f3f3; border-radius: 4px; font-size: 18px; }
.drop h4.second { margin-top: 28px; }
.pair { display: grid; grid-template-columns: 1fr 1fr; gap: 28px; margin: 18px 14px 0; }
.slot { border: 1px dashed #a3aac0; }
.pair .slot { padding: 24px 18px 0 13px; }
.fld { height: 96px; }
.pair .fld:last-child { height: 81px; }
dt { font-size: 14px; line-height: 20px; color: #444; }
dd { display: flex; justify-content: space-between; font-size: 15px; line-height: 20px; height: 25px; margin: 16px 0 0 14px; }
dd svg { align-self: flex-end; color: #666; }
.slot.single { margin: 18px 14px 0; padding: 16px 2px; }
.chosen { position: relative; height: 74px; border: 2px solid #5f8bd0; padding: 7px 14px 0 9px; }
.del { position: absolute; top: -2px; right: -2px; width: 58px; height: 33px; background: #6a92d2; color: #fff; justify-content: flex-end; padding-right: 7px; }
.plus { position: absolute; left: calc(50% - 7px); width: 15px; height: 15px; border-radius: 50%; background: #6a92d2; color: #fff; font-size: 10px; line-height: 14px; text-align: center; }
.plus.up { top: -8px; }
.plus.low { bottom: -8px; }
.tip { position: absolute; left: 72px; top: 36px; width: 88px; height: 38px; background: #4f4c4d; border: 1px solid #6a6768; color: #fff; font-size: 22px; line-height: 36px; font-weight: 500; text-align: center; box-shadow: 0 6px 16px #00000055; }

.l-head { display: flex; align-items: flex-start; height: 95px; padding: 19px 18px 0 17px; background: #f3f3f3; }
.l-title { flex: 1; }
.l-title h3 { display: flex; align-items: center; gap: 14px; font-size: 19px; line-height: 28px; font-weight: 700; }
.l-title i, .m-head i { width: 29px; height: 28px; background: #6b94f7; color: #fff; display: flex; align-items: center; justify-content: center; }
.l-title p { font-size: 14px; line-height: 20px; margin-top: 12px; }
.sm { width: 37px; height: 37px; border: 1px solid #999; border-radius: 5px; color: #666; flex: none; }
.sm.cogs { width: 51px; margin-right: 9px; gap: 6px; }
.sm.new { width: 71px; margin-left: 5px; font-size: 15px; color: #5274ce; }
table { width: 100%; border-collapse: collapse; table-layout: fixed; font-size: 15px; }
.w-num { width: 59px; } .w-chk { width: 37px; } .w-a { width: 175px; } .w-b { width: 139px; } .w-c { width: 160px; } .w-d { width: 175px; }
th { height: 38px; padding: 0; background: #f3f3f3; text-align: left; font-weight: 600; color: #444; }
th.named { border-right: 1px solid #aaa; }
th span { display: flex; justify-content: space-between; align-items: center; padding: 0 14px 0 10px; }
th svg { color: #666; }
td { height: 34px; padding: 0; border-bottom: 1px solid #ddd; line-height: 20px; }
td.num { text-align: right; padding-right: 19px; color: #666; }
td.t { padding-left: 10px; }
input[type="checkbox"] { appearance: none; display: block; width: 19px; height: 19px; margin-left: 10px; border: 1px solid #999; border-radius: 2px; background: #fff; }
.act button { width: 24px; height: 24px; margin-left: 9px; border: 1px solid #999; border-radius: 5px; color: #666; }
.all { display: block; text-align: center; font-size: 15px; line-height: 51px; color: #4a6bc0; }

.col-b { padding: 16px 0 15px; }
.mapcard { box-shadow: none; padding-bottom: 26px; overflow: visible; border-radius: 0; }
.mapcard::after { content: ""; position: absolute; inset: 0 2px 0 3px; border: 2px solid #5079bd; pointer-events: none; box-shadow: 0 0 0 2px #eef1f8; }
.m-head { display: flex; align-items: center; height: 64px; padding: 0 23px 2px 19px; }
.m-head i { border-radius: 4px; }
.m-head h3 { flex: 1; margin-left: 14px; font-size: 18px; font-weight: 700; }
.map { position: relative; margin-left: 3px; font-family: Roboto, "Liberation Sans", sans-serif; overflow: hidden; }
.map > svg { display: block; width: 100%; aspect-ratio: 803 / 453; }
.map text { paint-order: stroke; stroke: #ffffffd0; stroke-width: 7px; stroke-linejoin: round; }
.road text { font-size: 36px; fill: #62666c; }
.road text.b { font-size: 42px; fill: #7a5420; }
.hood text { font-size: 45px; font-weight: 500; fill: #5f6368; }
.place text { font-size: 48px; }
.metro text { font-size: 36px; font-weight: 700; fill: #fff; stroke: none; }
.shield text { font-size: 30px; font-weight: 700; fill: #fff; stroke: none; }
.map text.us { font-size: 33px; font-weight: 500; fill: #5f6368; stroke: none; }
.map text.logo { font-family: Lato, sans-serif; font-size: 63px; font-weight: 700; stroke: #fff; stroke-width: 6px; }
.kinds { position: absolute; left: 9px; top: 12px; display: flex; box-shadow: 0 1px 4px #0003; }
.kinds button { height: 46px; padding: 0 19px; font-size: 20px; color: #666; }
.kinds button.cur { padding-right: 20px; color: #000; font-weight: 500; border-right: 1px solid #eee; }
.ctl { position: absolute; right: 11px; bottom: 27px; display: flex; flex-direction: column; gap: 38px; }
.peg, .zoomer { width: 46px; background: #fff; box-shadow: 0 1px 4px #0004; }
.peg { height: 46px; }
.zoomer button { position: relative; width: 46px; height: 47px; }
.zoomer button + button { box-shadow: inset 0 1px #e6e6e6; }
.zoomer i { width: 21px; height: 4px; background: #666; }
.zoomer i.v { position: absolute; transform: rotate(90deg); }
.credit { position: absolute; right: 0; bottom: 0; display: flex; gap: 17px; padding: 0 7px; background: #f5f5f5b0; font-size: 11px; line-height: 15px; font-weight: 500; color: #222; }
.mapcard h4 { margin: 16px 14px 0; font-size: 15px; line-height: 20px; font-weight: 700; }
.pills { display: flex; gap: 9px; padding: 5px 18px 0; font-size: 15px; }
.pills span { display: flex; align-items: center; gap: 4px; height: 66px; padding: 0 14px; border: 1px solid #ddd; border-radius: 20px; }

.right { width: 556px; flex: none; border-left: 1px solid #c9c9c9; }
.crumbs { display: flex; align-items: center; gap: 15px; height: 66px; padding: 0 0 6px 36px; border-bottom: 1px solid #c9c9c9; font-size: 24px; color: #202d5c; }
.crumbs a { color: #5274ce; }
.props { padding: 0 20px 16px 22px; }
.lab { display: flex; align-items: center; column-gap: 17px; margin: 40px 0 3px; font-size: 21px; line-height: 30px; color: #444; }
.lookup .lab { margin-bottom: 10px; font-size: 23px; }
.first .lab { display: block; margin-top: 10px; }
.first label { display: block; line-height: 32px; padding-right: 50px; margin-bottom: 12px; }
.info { display: block; color: #747474; margin-bottom: 2px; }
.first .info { margin: 0 2px 4px; }
abbr { color: #b02a1a; margin: 0 3px 0 4px; font-size: 18px; }
.inp { display: flex; align-items: center; height: 56px; padding: 0 9px 0 22px; border: 1px solid #747474; border-radius: 8px; color: #202d5c; }
.inp input { border: 0; outline: 0; padding: 0; background: none; width: 100%; }
.inp input.fit { field-sizing: content; width: auto; }
.orb { width: 25px; height: 25px; border-radius: 50%; margin-left: 6px; box-shadow: inset 0 -2px 3px #0003, inset 0 4px 4px #ffffff70; }
.orb.purple { background: #9a44f5; } .orb.red { background: #b5432c; } .orb.yellow { background: #efd94b; } .orb.green { background: #62a935; }
.mag { margin-left: auto; color: #747474; }
</style>
